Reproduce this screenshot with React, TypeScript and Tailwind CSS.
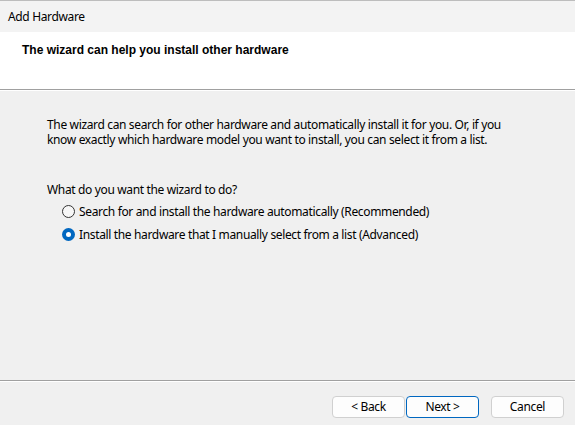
const UI = "font-['Segoe_UI','Noto_Sans',sans-serif] tracking-[-0.35px]";

function Radio({ checked }: { checked: boolean }) {
  return checked ? (
    <span className="flex h-[13px] w-[13px] shrink-0 items-center justify-center rounded-full bg-[#0067c0]">
      <span className="h-[5px] w-[5px] rounded-full bg-white" />
    </span>
  ) : (
    <span className="h-[13px] w-[13px] shrink-0 rounded-full border border-[#333] bg-[#f7f7f7]" />
  );
}

function Btn({ label, primary }: { label: string; primary?: boolean }) {
  return (
    <button
      className={`h-[22px] w-[73px] rounded-[4px] bg-[#fdfdfd] text-[12px] text-black ${
        primary ? "border border-[#0067c0]" : "border border-[#d0d0d0]"
      }`}
    >
      {label}
    </button>
  );
}

export default function App() {
  return (
    <div className={`flex h-[425px] w-[575px] flex-col bg-[#f0f0f0] text-[12px] text-black ${UI}`}>
      {/* title bar */}
      <div className="flex h-[32px] items-center border-t border-[#bdbdbd] bg-[#f3f3f3] pl-[8px]">
        Add Hardware
      </div>

      {/* header */}
      <div className="h-[58px] border-b border-[#a0a0a0] bg-white pl-[22px] pt-[9px]">
        <div className="font-['Liberation_Sans',sans-serif] text-[12px] font-bold tracking-normal">
          The wizard can help you install other hardware
        </div>
      </div>
      <div className="h-px bg-white" />

      {/* body */}
      <div className="flex flex-1 flex-col pl-[47px] pt-[26px]">
        <p className="w-[462px] leading-[15px]">
          The wizard can search for other hardware and automatically install it for you. Or, if you
          know exactly which hardware model you want to install, you can select it from a list.
        </p>
        <div className="mt-[35px] leading-[15px]">What do you want the wizard to do?</div>
        <div className="mt-[7px] flex flex-col gap-[8px] pl-[15px]">
          <label className="flex h-[15px] items-center gap-[4px]">
            <Radio checked={false} />
            Search for and install the hardware automatically (Recommended)
          </label>
          <label className="flex h-[15px] items-center gap-[4px]">
            <Radio checked />
            Install the hardware that I manually select from a list (Advanced)
          </label>
        </div>
      </div>

      {/* footer */}
      <div className="border-t border-[#a0a0a0]" />
      <div className="h-px bg-white" />
      <div className="flex h-[43px] items-start justify-end pr-[11px] pt-[14px]">
        <div className="flex gap-[1px]">
          <Btn label="< Back" />
          <Btn label="Next >" primary />
        </div>
        <div className="ml-[12px]">
          <Btn label="Cancel" />
        </div>
      </div>
    </div>
  );
}
